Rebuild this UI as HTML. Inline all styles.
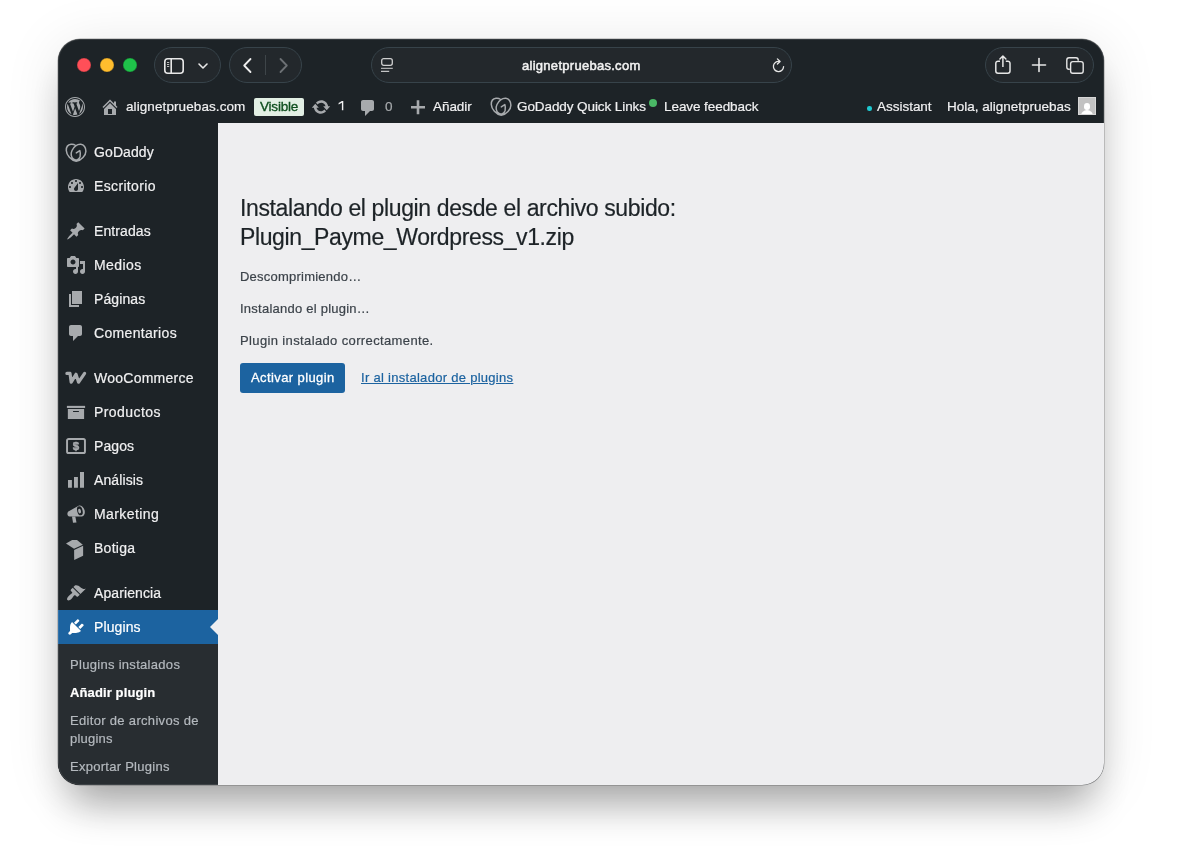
<!DOCTYPE html>
<html><head><meta charset="utf-8">
<style>
*{box-sizing:border-box;margin:0;padding:0}
html,body{width:1177px;height:861px;overflow:hidden;background:#fff;font-family:"Liberation Sans",sans-serif}
.win{will-change:transform;position:absolute;left:58px;top:39px;width:1046px;height:746px;border-radius:22px;overflow:hidden;background:#1d2327;
 box-shadow:0 30px 40px -12px rgba(0,0,0,.32),0 6px 56px rgba(0,0,0,.10),0 0 0 .5px rgba(0,0,0,.35)}
.abs{position:absolute}
.tl{position:absolute;top:19px;width:14px;height:14px;border-radius:50%;box-shadow:inset 0 0 0 .5px rgba(0,0,0,.25)}
.pill{position:absolute;top:8px;height:36px;border-radius:18px;background:#23282c;border:1px solid #37434a}
.t{position:absolute;white-space:nowrap;line-height:1;-webkit-text-stroke:.2px currentColor}
svg{position:absolute;overflow:visible}
/* admin bar */
.ab{position:absolute;left:0;top:52px;width:1046px;height:32px}
.ab .t{font-size:13.5px;color:#f0f0f1;top:8.6px}
.ab svg{fill:#a7aaad}
.side{position:absolute;left:0;top:84px;width:160px;height:662px;background:#1d2327}
.content{position:absolute;left:160px;top:84px;width:886px;height:662px;background:#eeeef0}
.mi{position:absolute;left:0;width:160px;height:34px}
.mi .t{left:36px;top:10px;font-size:14px;color:#f0f0f1;letter-spacing:.1px}
.mi svg{left:8px;top:7px;width:20px;height:20px;fill:#a7aaad}
.sub{position:absolute;left:0;top:521px;width:160px;height:141px;background:#282d31}
.sub .t{left:12px;font-size:13px;color:#b4b9be;letter-spacing:.22px}
</style></head><body>
<div class="win">
  <!-- safari toolbar -->
  <div class="tl" style="left:19px;background:#ff4f58"></div>
  <div class="tl" style="left:42px;background:#ffbd2e"></div>
  <div class="tl" style="left:65px;background:#1fc24a"></div>
  <div class="pill" style="left:96px;width:67px"></div>
  <div class="pill" style="left:171px;width:73px"></div>
  <div class="pill" style="left:313px;width:421px"></div>
  <div class="pill" style="left:927px;width:109px"></div>
  <!-- sidebar toggle icon -->
  <svg style="left:106px;top:19px" width="20" height="16" viewBox="0 0 20 16"><rect x="0.8" y="0.8" width="18.4" height="14.4" rx="3" fill="none" stroke="#e8e8e8" stroke-width="1.6"/><line x1="7.2" y1="1" x2="7.2" y2="15" stroke="#e8e8e8" stroke-width="1.6"/><rect x="3" y="4" width="2.2" height="1" fill="#bbb"/><rect x="3" y="6" width="2.2" height="1" fill="#bbb"/><rect x="3" y="8" width="2.2" height="1" fill="#bbb"/></svg>
  <svg style="left:140px;top:24px" width="10" height="6" viewBox="0 0 10 6"><polyline points="1,1 5,5 9,1" fill="none" stroke="#e8e8e8" stroke-width="1.6" stroke-linecap="round" stroke-linejoin="round"/></svg>
  <!-- back / fwd -->
  <svg style="left:185px;top:19px" width="9" height="15" viewBox="0 0 9 15"><polyline points="7.5,1 1.2,7.5 7.5,14" fill="none" stroke="#ececec" stroke-width="1.8" stroke-linecap="round" stroke-linejoin="round"/></svg>
  <div class="abs" style="left:207px;top:16px;width:1px;height:20px;background:#3e4549"></div>
  <svg style="left:221px;top:19px" width="9" height="15" viewBox="0 0 9 15"><polyline points="1.5,1 7.8,7.5 1.5,14" fill="none" stroke="#6c7074" stroke-width="1.8" stroke-linecap="round" stroke-linejoin="round"/></svg>
  <!-- url icon -->
  <svg style="left:323px;top:19px" width="13" height="15" viewBox="0 0 13 15"><rect x="0.7" y="0.7" width="10.6" height="6.6" rx="2" fill="none" stroke="#cfcfcf" stroke-width="1.3"/><rect x="0" y="9.8" width="11.8" height="1" fill="#cfcfcf"/><rect x="0" y="12.8" width="8.2" height="1" fill="#ececec"/></svg>
  <div class="t" style="left:464px;top:20px;font-size:13px;color:#f2f2f2;letter-spacing:.28px;-webkit-text-stroke:.5px #f2f2f2">alignetpruebas.com</div>
  <!-- reload -->
  <svg style="left:714px;top:19px" width="14" height="15" viewBox="0 0 14 15"><path d="M11.6 8.6 A5.1 5.1 0 1 1 7.2 3.4" fill="none" stroke="#e6e6e6" stroke-width="1.3" stroke-linecap="round"/><polyline points="5.4,0.9 8.1,3.5 5.4,6" fill="none" stroke="#e6e6e6" stroke-width="1.3" stroke-linecap="round" stroke-linejoin="round"/></svg>
  <!-- share / plus / tabs -->
  <svg style="left:937px;top:16px" width="16" height="19" viewBox="0 0 16 19"><path d="M5 6.2 H3 A2.2 2.2 0 0 0 0.8 8.4 V16 A2.2 2.2 0 0 0 3 18.2 H12.8 A2.2 2.2 0 0 0 15 16 V8.4 A2.2 2.2 0 0 0 12.8 6.2 H10.8" fill="none" stroke="#e6e6e6" stroke-width="1.5"/><line x1="7.9" y1="1.2" x2="7.9" y2="12" stroke="#e6e6e6" stroke-width="1.5"/><polyline points="4.9,4 7.9,1 10.9,4" fill="none" stroke="#e6e6e6" stroke-width="1.5" stroke-linecap="round" stroke-linejoin="round"/></svg>
  <svg style="left:974px;top:19px" width="14" height="14" viewBox="0 0 14 14"><line x1="7" y1="0.5" x2="7" y2="13.5" stroke="#e6e6e6" stroke-width="1.6" stroke-linecap="round"/><line x1="0.5" y1="7" x2="13.5" y2="7" stroke="#e6e6e6" stroke-width="1.6" stroke-linecap="round"/></svg>
  <svg style="left:1008px;top:18px" width="18" height="17" viewBox="0 0 18 17"><path d="M3.8 12.2 H3 A2.2 2.2 0 0 1 0.8 10 V3 A2.2 2.2 0 0 1 3 0.8 H10 A2.2 2.2 0 0 1 12.2 3 V3.8" fill="none" stroke="#e6e6e6" stroke-width="1.4"/><rect x="4.6" y="4.6" width="12.6" height="11.6" rx="2.2" fill="none" stroke="#e6e6e6" stroke-width="1.4"/></svg>

  <!-- admin bar -->
  <div class="ab">
    <svg style="left:7px;top:6px" width="20" height="20" viewBox="0 0 20 20"><path d="M20 10c0-5.52-4.48-10-10-10S0 4.48 0 10s4.48 10 10 10 10-4.48 10-10zM10 1.01c4.97 0 8.99 4.02 8.99 8.99s-4.02 8.99-8.99 8.99S1.01 14.97 1.01 10 5.03 1.01 10 1.01zM8.01 14.82L4.96 6.61c.49-.03 1.05-.08 1.05-.08.43-.05.38-1.01-.06-.99 0 0-1.29.1-2.13.1-.15 0-.33 0-.52-.01 1.44-2.17 3.9-3.6 6.7-3.6 2.09 0 3.99.79 5.41 2.09-.6-.08-1.450.35-1.45 1.42 0 .66.38 1.22.79 1.88.31.54.5 1.22.5 2.21 0 1.34-1.270 4.48-1.27 4.48l-2.71-7.5c.48-.03.75-.16.75-.16.43-.05.38-1.1-.05-1.08 0 0-1.3.11-2.14.11-.78 0-2.11-.11-2.11-.11-.43-.02-.48 1.06-.05 1.08l.84.08 1.12 3.04zm6.02 2.15L16.64 10s.67-1.69.39-3.81c.63 1.140.94 2.42.94 3.81 0 2.96-1.56 5.58-3.94 6.970zM2.68 6.77L6.5 17.250c-2.670-1.3-4.47-4.08-4.47-7.25 0-1.160.2-2.230.65-3.230zm7.450 4.53l2.29 6.25c-.75.27-1.57.42-2.42.42-.72 0-1.41-.11-2.06-.32z"/></svg>
    <svg style="left:42px;top:6.3px" width="20" height="20" viewBox="0 0 20 20"><path d="M16 8.5l1.53 1.53-1.06 1.06L10 4.62l-6.47 6.47-1.06-1.06L10 2.5l4 4v-2h2v4zm-6-2.46l6 5.99V18H4v-5.97zM12 17v-5H8v5h4z"/></svg>
    <div class="t" style="left:68px;letter-spacing:.09px">alignetpruebas.com</div>
    <div class="abs" style="left:196px;top:7px;width:50px;height:18px;border-radius:2px;background:#e2efe4"></div>
    <div class="t" style="left:202px;top:9px;color:#0f4f1f;letter-spacing:-.21px;-webkit-text-stroke:.35px #0f4f1f">Visible</div>
    <svg style="left:253px;top:6px" width="20" height="20" viewBox="0 0 20 20"><path d="M10.2 3.28c3.53 0 6.43 2.61 6.92 6h2.08l-3.5 4-3.5-4h2.32c-.45-1.970-2.21-3.45-4.32-3.45-1.45 0-2.73.71-3.54 1.78L4.95 5.66C6.23 4.2 8.11 3.28 10.2 3.28zm-.4 13.44c-3.52 0-6.43-2.61-6.92-6H.8l3.5-4c1.17 1.33 2.33 2.67 3.5 4H5.48c.45 1.97 2.21 3.45 4.32 3.45 1.45 0 2.73-.71 3.54-1.780l1.71 1.950c-1.28 1.46-3.15 2.38-5.25 2.38z"/></svg>
    <svg style="left:279.5px;top:10.3px" width="6" height="10" viewBox="0 0 6 10"><path d="M3.9 0H5.3V9.3H3.9V1.8L0.6 3.4V2Z" fill="#f0f0f1"/></svg>
    <svg style="left:300px;top:7px" width="20" height="20" viewBox="0 0 20 20"><path d="M5 2h9c1.1 0 2 .9 2 2v7c0 1.1-.9 2-2 2h-2l-5 5v-5H5c-1.1 0-2-.9-2-2V4c0-1.1.9-2 2-2z"/></svg>
    <div class="t" style="left:327px;color:#a7aaad">0</div>
    <svg style="left:350px;top:6px" width="20" height="20" viewBox="0 0 20 20"><path d="M17 9v2.6h-5.7v5.7H8.7v-5.7H3V9h5.7V3.3h2.6V9z"/></svg>
    <div class="t" style="left:375px;letter-spacing:-.06px">Añadir</div>
    <svg style="left:433px;top:7px" width="20" height="18" viewBox="0 0 20 18"><path d="M9.6 1.5C8.3 .5 6.6 .1 5 .3C2 .7 .2 3.3 .3 6.5C.5 11 5 16.6 10.2 17.2C15.4 16.6 19.9 11.2 19.9 7.2C20 3.5 17.8 .5 14.8 .3C11.2 .1 7.8 3 6 6.5C4.5 9.5 5 13.4 7.6 15.2C10 16.8 13.2 15.8 14.1 12.5C14.5 10.8 14.4 8.3 13.8 6.6L10.3 8.9" fill="none" stroke="#a7aaad" stroke-width="1.5" stroke-linecap="round" stroke-linejoin="round"/></svg>
    <div class="t" style="left:459px;letter-spacing:-.085px">GoDaddy Quick Links</div>
    <div class="abs" style="left:591px;top:8px;width:8px;height:8px;border-radius:50%;background:#4ab866"></div>
    <div class="t" style="left:606px;letter-spacing:-.07px">Leave feedback</div>
    <div class="abs" style="left:809px;top:15px;width:4.5px;height:4.5px;border-radius:50%;background:#1ec8d0"></div>
    <div class="t" style="left:819px;letter-spacing:-.02px">Assistant</div>
    <div class="t" style="left:889px;letter-spacing:-.01px">Hola, alignetpruebas</div>
    <div class="abs" style="left:1020px;top:6px;width:18px;height:18px;background:#c2c2c2;border:1px solid #d6d6d6;overflow:hidden">
      <div class="abs" style="left:5px;top:4.8px;width:6.4px;height:6.8px;border-radius:50%;background:#fff"></div>
      <div class="abs" style="left:2.2px;top:12.2px;width:12px;height:8px;border-radius:6px 6px 0 0;background:#fff"></div>
    </div>
  </div>

  <div class="side">
    <div class="mi" style="top:12px"><svg viewBox="0 0 20 20" style="top:8.5px"><path d="M9.6 1.5C8.3 .5 6.6 .1 5 .3C2 .7 .2 3.3 .3 6.5C.5 11 5 16.6 10.2 17.2C15.4 16.6 19.9 11.2 19.9 7.2C20 3.5 17.8 .5 14.8 .3C11.2 .1 7.8 3 6 6.5C4.5 9.5 5 13.4 7.6 15.2C10 16.8 13.2 15.8 14.1 12.5C14.5 10.8 14.4 8.3 13.8 6.6L10.3 8.9" fill="none" stroke="#a7aaad" stroke-width="1.5" stroke-linecap="round" stroke-linejoin="round"/></svg><div class="t">GoDaddy</div></div>
    <div class="mi" style="top:46px"><svg viewBox="0 0 20 20"><path fill-rule="evenodd" d="M3.76 16h12.48c1.1-1.37 1.76-3.11 1.76-5 0-4.42-3.58-8-8-8s-8 3.58-8 8c0 1.89.66 3.63 1.76 5zM10 4c.55 0 1 .45 1 1s-.45 1-1 1-1-.45-1-1 .45-1 1-1zM6 6c.55 0 1 .45 1 1s-.45 1-1 1-1-.45-1-1 .45-1 1-1zm8 0c.55 0 1 .45 1 1s-.45 1-1 1-1-.45-1-1 .45-1 1-1zm-5.37 5.55L12 7v6c0 1.1-.9 2-2 2s-2-.9-2-2c0-.57.24-1.08.63-1.45zM4 10c.55 0 1 .45 1 1s-.45 1-1 1-1-.45-1-1 .45-1 1-1zm12 0c.55 0 1 .45 1 1s-.45 1-1 1-1-.45-1-1 .45-1 1-1z"/></svg><div class="t" style="letter-spacing:0.35px">Escritorio</div></div>
    <div class="mi" style="top:91px"><svg viewBox="0 0 20 20"><path d="M10.44 3.02l1.82-1.82 6.36 6.35-1.83 1.82c-1.05-.68-2.48-.57-3.41.36l-.75.75c-.92.93-1.04 2.35-.35 3.41l-1.83 1.82-2.41-2.41-2.8 2.79c-.42.42-3.38 2.71-3.8 2.290s1.86-3.39 2.28-3.81l2.79-2.79L4.1 9.36l1.83-1.82c1.05.69 2.48.57 3.4-.36l.75-.75c.93-.92 1.05-2.35.36-3.41z"/></svg><div class="t">Entradas</div></div>
    <div class="mi" style="top:125px"><svg viewBox="0 0 20 20"><path fill-rule="evenodd" d="M13 11V4c0-.55-.45-1-1-1h-1.67L9 1H5L3.67 3H2c-.55 0-1 .45-1 1v7c0 .55.45 1 1 1h10c.55 0 1-.45 1-1zM7 4.5c1.38 0 2.5 1.12 2.5 2.5S8.38 9.5 7 9.5 4.5 8.38 4.5 7 5.62 4.5 7 4.5z"/><path d="M14 6h5v10.5c0 1.38-1.12 2.5-2.5 2.5S14 17.88 14 16.5s1.12-2.5 2.5-2.5c.17 0 .34.02.5.05V9h-3V6zm-4 8.05V11h2v5.5c0 1.38-1.12 2.5-2.5 2.5S7 17.88 7 16.5 8.12 14 9.5 14c.17 0 .34.02.5.05z"/></svg><div class="t" style="letter-spacing:0.4px">Medios</div></div>
    <div class="mi" style="top:159px"><svg viewBox="0 0 20 20"><path d="M6 15V2h10v13H6zm-1 1h8v2H3V5h2v11z"/></svg><div class="t">Páginas</div></div>
    <div class="mi" style="top:193px"><svg viewBox="0 0 20 20"><path d="M5 2h9c1.1 0 2 .9 2 2v7c0 1.1-.9 2-2 2h-2l-5 5v-5H5c-1.1 0-2-.9-2-2V4c0-1.1.9-2 2-2z"/></svg><div class="t" style="letter-spacing:0.33px">Comentarios</div></div>
    <div class="mi" style="top:238px"><svg viewBox="0 0 20 20"><polyline points="0.9,5.4 4,5.4 5.2,14.2 10,6.3 12.6,14.2 18.6,5.4" fill="none" stroke="#a7aaad" stroke-width="3.2" stroke-linecap="round" stroke-linejoin="round"/></svg><div class="t" style="letter-spacing:0.25px">WooCommerce</div></div>
    <div class="mi" style="top:272px"><svg viewBox="0 0 20 20"><path d="M0.9 3.85h18.2v2.1H0.9z"/><path fill-rule="evenodd" d="M1.85 6.9h16.25V17H1.85zM7.05 9.05v1h5.85v-1z"/></svg><div class="t" style="letter-spacing:0.43px">Productos</div></div>
    <div class="mi" style="top:306px"><svg viewBox="0 0 20 20"><rect x="1.05" y="2.95" width="17.9" height="14.1" rx="1.6" fill="none" stroke="#a7aaad" stroke-width="1.95"/><text x="10" y="13.9" text-anchor="middle" font-family="Liberation Sans" font-weight="bold" font-size="11.5" fill="#a7aaad" stroke="#a7aaad" stroke-width=".5">$</text></svg><div class="t">Pagos</div></div>
    <div class="mi" style="top:340px"><svg viewBox="0 0 20 20"><path d="M2 10h3.9v7.8H2zM8 7.1h3.9v10.7H8zM14 2.1h4v15.7h-4z"/></svg><div class="t">Análisis</div></div>
    <div class="mi" style="top:374px"><svg viewBox="0 0 20 20"><path d="M2.8 7.3L12.6 1.7C14.6 .9 17.6 2.6 18.6 6.2 19.4 9.6 18 12.2 15.9 12.5L3.6 12.5C2 12.4 1.2 11.2 1.4 9.6 1.5 8.5 2 7.7 2.8 7.3Z"/><ellipse cx="13.9" cy="6.8" rx="2.7" ry="4.6" transform="rotate(-14 13.9 6.8)" fill="#1c2125"/><ellipse cx="13.6" cy="7.1" rx="1.4" ry="2.3" transform="rotate(-14 13.6 7.1)"/><path d="M6 12.4L9.3 12.4 10.5 18.6 7 18.8Z"/></svg><div class="t" style="letter-spacing:0.42px">Marketing</div></div>
    <div class="mi" style="top:408px"><svg viewBox="0 0 20 20"><path d="M0 5.5L6.1 1.9 11 2.1 16.8 6.8 8 10.8Z"/><path d="M8.1 12L17.1 7.8 17.1 17.8 8.2 22Z"/></svg><div class="t" style="letter-spacing:0.27px">Botiga</div></div>
    <div class="mi" style="top:453px"><svg viewBox="0 0 20 20"><path d="M14.48 11.06L7.41 3.99l1.5-1.5c.5-.56 2.3-.47 3.51.32 1.21.8 1.43 1.28 2.91 2.1 1.18.64 2.45 1.26 4.45.85zm-.71.71L6.7 4.7 4.93 6.47c-.39.39-.39 1.02 0 1.41l1.06 1.06c.39.39.39 1.03 0 1.42-.6.6-1.43 1.11-2.21 1.69-.35.26-.7.53-1.01.84C1.43 14.23.4 16.08 1.4 17.07c.99 1 2.84-.03 4.18-1.36.31-.31.58-.66.85-1.02.57-.78 1.08-1.61 1.690-2.21.39-.39 1.02-.39 1.41 0l1.06 1.06c.39.39 1.02.39 1.41 0z"/></svg><div class="t">Apariencia</div></div>
    <div class="mi" style="top:487px;background:#1c63a0"><svg viewBox="0 0 20 20" style="fill:#fff"><path d="M13.11 4.36L9.87 7.6 8 5.73l3.24-3.24c.35-.34 1.05-.2 1.56.32.52.51.66 1.21.31 1.55zm-8 1.77l.91-1.12 9.01 9.01-1.19.84c-.71.71-2.63 1.16-3.82 1.16H6.14L4.9 17.26c-.59.59-1.54.59-2.12 0-.59-.58-.59-1.53 0-2.12l1.24-1.24v-3.88c0-1.13.4-3.19 1.09-3.89zm7.26 3.97l3.24-3.24c.34-.35 1.04-.21 1.55.31.52.51.66 1.21.31 1.55l-3.24 3.25z"/></svg><div class="t" style="color:#fff">Plugins</div>
      <div class="abs" style="left:152px;top:9px;width:0;height:0;border-top:8px solid transparent;border-bottom:8px solid transparent;border-right:8px solid #eeeef0"></div>
    </div>
    <div class="sub">
      <div class="t" style="top:14px;letter-spacing:.3px">Plugins instalados</div>
      <div class="t" style="top:42px;color:#fff;font-weight:bold;letter-spacing:.12px">Añadir plugin</div>
      <div class="t" style="top:70px;letter-spacing:.32px">Editor de archivos de</div>
      <div class="t" style="top:88px">plugins</div>
      <div class="t" style="top:116px;letter-spacing:.27px">Exportar Plugins</div>
    </div>
  </div>
  <div class="content">
    <div class="t" style="left:22px;top:70.5px;font-size:23px;line-height:29.9px;color:#1d2327;letter-spacing:-.375px">Instalando el plugin desde el archivo subido:<br>Plugin_Payme_Wordpress_v1.zip</div>
    <div class="t" style="left:22px;top:147px;font-size:13px;color:#3c434a;letter-spacing:.23px">Descomprimiendo…</div>
    <div class="t" style="left:22px;top:179px;font-size:13px;color:#3c434a;letter-spacing:.24px">Instalando el plugin…</div>
    <div class="t" style="left:22px;top:211px;font-size:13px;color:#3c434a;letter-spacing:.37px">Plugin instalado correctamente.</div>
    <div class="abs" style="left:22px;top:240px;width:105px;height:30px;border-radius:3px;background:#1c63a0"></div>
    <div class="t" style="left:33px;top:248px;font-size:13px;color:#fff;letter-spacing:.4px;-webkit-text-stroke:.3px #fff">Activar plugin</div>
    <div class="t" style="left:143px;top:248px;font-size:13px;color:#1c63a0;letter-spacing:.29px;text-decoration:underline">Ir al instalador de plugins</div>
  </div>
  <div class="abs" style="left:0;top:0;width:1046px;height:746px;border-radius:22px;border:1px solid rgba(255,255,255,.10);pointer-events:none"></div>
</div>
</body></html>
